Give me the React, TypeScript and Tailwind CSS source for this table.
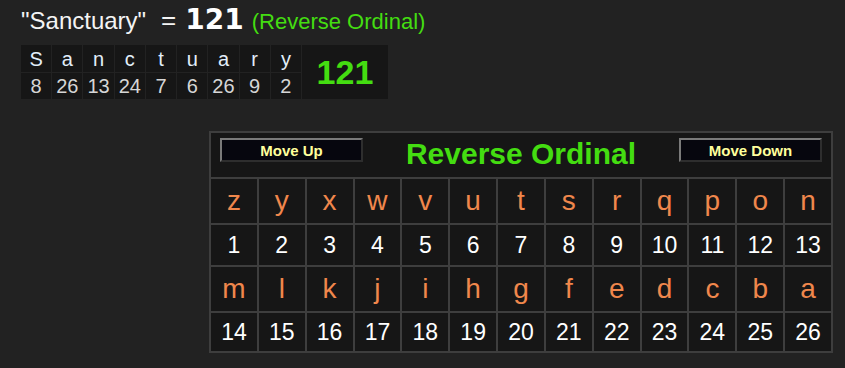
const word = [
  ["S", 8],
  ["a", 26],
  ["n", 13],
  ["c", 24],
  ["t", 7],
  ["u", 6],
  ["a", 26],
  ["r", 9],
  ["y", 2],
] as const;

const alphabet = "zyxwvutsrqponmlkjihgfedcba".split("");

function LetterRow({ letters }: { letters: string[] }) {
  return (
    <>
      {letters.map((l, i) => (
        <div
          key={i}
          className="flex items-center justify-center bg-[#161616] text-[28px] leading-[28px] text-[#f0874c]"
        >
          {l}
        </div>
      ))}
    </>
  );
}

function NumberRow({ start }: { start: number }) {
  return (
    <>
      {Array.from({ length: 13 }, (_, i) => (
        <div
          key={i}
          className="flex items-center justify-center bg-[#161616] text-[23px] leading-[23px] text-white"
        >
          {start + i}
        </div>
      ))}
    </>
  );
}

function MoveButton({ label }: { label: string }) {
  return (
    <button className="mt-[5px] flex h-[24px] w-[143px] items-center justify-center border-2 border-t-[#7a7a7a] border-l-[#7a7a7a] border-b-[#2e2e2e] border-r-[#2e2e2e] bg-[#06060e] text-[15px] font-bold leading-none text-[#ffff9c]">
      {label}
    </button>
  );
}

export default function App() {
  return (
    <div className="min-h-[368px] bg-[#222222] font-['Liberation_Sans',Arial,sans-serif]">
      {/* heading */}
      <div className="flex h-[45px] items-baseline whitespace-pre pl-[21px] pt-[5px] leading-[30px]">
        <span className="text-[24px] text-[#f4f4f4]">"Sanctuary"</span>
        <span className="ml-[15px] text-[26px] text-[#f4f4f4]">=</span>
        <span className="ml-[9px] font-['DejaVu_Sans',Verdana,sans-serif] text-[28px] font-bold text-white">
          121
        </span>
        <span className="ml-[8px] text-[22px] text-[#44dd11]">(Reverse Ordinal)</span>
      </div>

      {/* word breakdown */}
      <div className="ml-[21px] grid w-[367px] grid-cols-[repeat(9,minmax(0,1fr))_86px] grid-rows-[27px_26px] gap-[1px]">
        {word.map(([l], i) => (
          <div
            key={"l" + i}
            className="flex items-center justify-center bg-[#161616] text-[20px] leading-none text-[#e2eefa]"
          >
            {l}
          </div>
        ))}
        <div className="col-start-10 row-span-2 row-start-1 flex items-center justify-center bg-[#161616] text-[34px] font-bold leading-none text-[#44dd11]">
          121
        </div>
        {word.map(([, n], i) => (
          <div
            key={"n" + i}
            className="row-start-2 flex items-center justify-center bg-[#161616] text-[20px] leading-none text-[#d6d6d6]"
          >
            {n}
          </div>
        ))}
      </div>

      {/* cipher chart */}
      <div className="ml-[209px] mt-[32px] w-[624px] border-2 border-[#3e3e3e] bg-[#161616]">
        <div className="flex h-[44px] items-start justify-between px-[9px]">
          <MoveButton label="Move Up" />
          <div className="mt-[6px] text-[30px] font-bold leading-[30px] text-[#44dd11]">
            Reverse Ordinal
          </div>
          <MoveButton label="Move Down" />
        </div>
        <div className="grid grid-cols-13 grid-rows-[44px_40px_44px_38px] gap-[2px] border-t-2 border-[#3e3e3e] bg-[#3e3e3e]">
          <LetterRow letters={alphabet.slice(0, 13)} />
          <NumberRow start={1} />
          <LetterRow letters={alphabet.slice(13)} />
          <NumberRow start={14} />
        </div>
      </div>
    </div>
  );
}
